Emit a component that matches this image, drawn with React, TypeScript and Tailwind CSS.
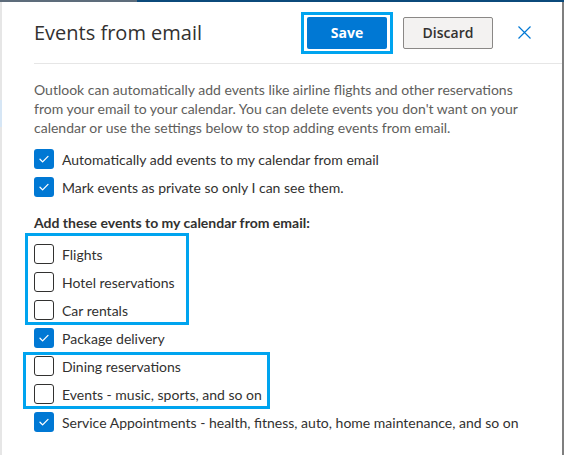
const GENERAL = [
  { label: "Automatically add events to my calendar from email", checked: true },
  { label: "Mark events as private so only I can see them.", checked: true },
];

const EVENTS = [
  { label: "Flights", checked: false },
  { label: "Hotel reservations", checked: false },
  { label: "Car rentals", checked: false },
  { label: "Package delivery", checked: true },
  { label: "Dining reservations", checked: false },
  { label: "Events - music, sports, and so on", checked: false },
  { label: "Service Appointments - health, fitness, auto, home maintenance, and so on", checked: true },
];

function CheckRow({ label, checked }: { label: string; checked: boolean }) {
  return (
    <div className="flex h-[28px] items-center gap-2">
      {checked ? (
        <span className="flex h-5 w-5 shrink-0 items-center justify-center rounded-[3px] bg-[#0078d4]">
          <svg width="12" height="12" viewBox="0 0 12 12" fill="none">
            <path d="M2 6.3l2.6 2.6L10 3.4" stroke="white" strokeWidth="1.3" strokeLinecap="round" strokeLinejoin="round" />
          </svg>
        </span>
      ) : (
        <span className="h-5 w-5 shrink-0 rounded-[3px] border border-[#323130] bg-white" />
      )}
      <span className="whitespace-nowrap text-[14px] text-[#323130]">{label}</span>
    </div>
  );
}

export default function App() {
  return (
    <div className="relative flex h-[455px] w-[564px] flex-col overflow-hidden bg-white font-['Lato',sans-serif]">
      {/* Outlook page behind the dialog */}
      <div className="flex h-[2px]">
        <div className="w-[137px] bg-[#5d6c7b]" />
        <div className="flex-1 bg-[#0b4a7b]" />
      </div>

      <div className="flex flex-1">
        <div className="flex w-[2px] flex-col bg-[#e6e6e6]">
          <div className="h-[98px]" />
          <div className="h-[27px] bg-[#d6e6f5]" />
        </div>

        {/* Dialog */}
        <div className="flex min-w-0 flex-1 flex-col rounded-tr-[5px] bg-white">
          <div className="ml-8 flex h-[62px] items-center border-b border-[#e6e6e6] pr-[31px] font-['Open_Sans',sans-serif]">
            <h1 className="text-[20px] text-[#323130]">Events from email</h1>
            <div className="ml-auto flex items-center">
              <button className="h-8 w-20 rounded-[2px] bg-[#0078d4] text-[14px] font-bold text-white">
                Save
              </button>
              <button className="ml-4 h-8 w-[90px] rounded-[2px] border border-[#8a8886] bg-[#f3f2f1] text-[14px] font-semibold text-[#323130]">
                Discard
              </button>
              <svg className="ml-[25px]" width="13" height="13" viewBox="0 0 13 13">
                <path d="M0.5 0.5l12 12M12.5 0.5l-12 12" stroke="#0078d4" strokeWidth="1.2" />
              </svg>
            </div>
          </div>

          <div className="flex flex-col px-8">
            <p className="mt-4 whitespace-nowrap text-[14px] leading-[19px] text-[#605e5c]">
              Outlook can automatically add events like airline flights and other reservations
              <br />
              from your email to your calendar. You can delete events you don't want on your
              <br />
              calendar or use the settings below to stop adding events from email.
            </p>

            <div className="mt-2 flex flex-col">
              {GENERAL.map((r) => (
                <CheckRow key={r.label} {...r} />
              ))}
            </div>

            <div className="mt-[11px] flex h-5 items-center text-[14px] font-bold text-[#323130]">
              Add these events to my calendar from email:
            </div>

            <div className="mt-2 flex flex-col">
              {EVENTS.map((r) => (
                <CheckRow key={r.label} {...r} />
              ))}
            </div>
          </div>
        </div>

        <div className="w-[2px] bg-[#7f7f7f]" />
      </div>

      {/* Annotation highlights */}
      <div className="absolute left-[301px] top-[12px] h-[42px] w-[92px] border-[3px] border-[#00a4ef]" />
      <div className="absolute left-[25px] top-[233px] h-[92px] w-[164px] border-[3px] border-[#00a4ef]" />
      <div className="absolute left-[23px] top-[352px] h-[57px] w-[247px] border-[3px] border-[#00a4ef]" />
    </div>
  );
}
